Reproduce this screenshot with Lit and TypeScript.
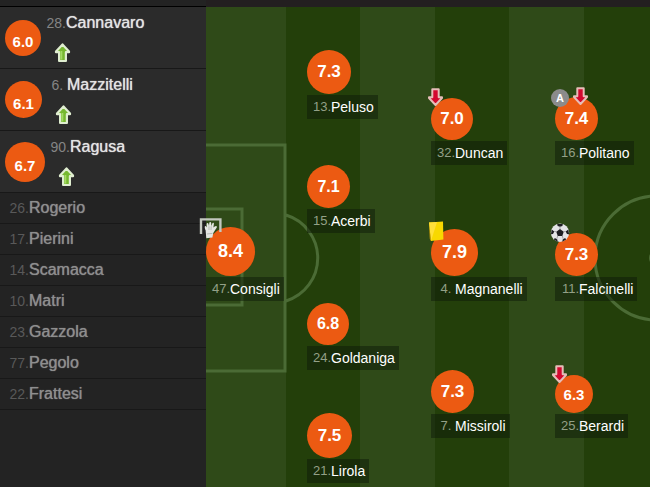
import { LitElement, html, css, svg, nothing } from "lit";
import { customElement, property } from "lit/decorators.js";
import { styleMap } from "lit/directives/style-map.js";

type Badge = "in" | "out" | "assist" | "goal" | "yellow" | "keeper";

interface BenchPlayer {
  no: number;
  name: string;
  rating?: string;
  size?: number;
}

interface PitchPlayer {
  no: number;
  name: string;
  rating: string;
  size: number;
  font: number;
  x: number;
  y: number;
  badges?: Badge[];
}

const bench: BenchPlayer[] = [
  { no: 28, name: "Cannavaro", rating: "6.0", size: 36 },
  { no: 6, name: "Mazzitelli", rating: "6.1", size: 37 },
  { no: 90, name: "Ragusa", rating: "6.7", size: 40 },
  { no: 26, name: "Rogerio" },
  { no: 17, name: "Pierini" },
  { no: 14, name: "Scamacca" },
  { no: 10, name: "Matri" },
  { no: 23, name: "Gazzola" },
  { no: 77, name: "Pegolo" },
  { no: 22, name: "Frattesi" },
];

// x and y give the top left corner of each name label on the pitch.
const lineup: PitchPlayer[] = [
  { no: 47, name: "Consigli", rating: "8.4", size: 49, font: 18, x: 0, y: 270, badges: ["keeper"] },
  { no: 13, name: "Peluso", rating: "7.3", size: 44, font: 17, x: 101, y: 88 },
  { no: 15, name: "Acerbi", rating: "7.1", size: 43, font: 16, x: 101, y: 202 },
  { no: 24, name: "Goldaniga", rating: "6.8", size: 42, font: 16, x: 101, y: 339 },
  { no: 21, name: "Lirola", rating: "7.5", size: 45, font: 17, x: 101, y: 452 },
  { no: 32, name: "Duncan", rating: "7.0", size: 42, font: 17, x: 225, y: 134, badges: ["out"] },
  { no: 4, name: "Magnanelli", rating: "7.9", size: 47, font: 18, x: 225, y: 270, badges: ["yellow"] },
  { no: 7, name: "Missiroli", rating: "7.3", size: 43, font: 17, x: 225, y: 407 },
  { no: 16, name: "Politano", rating: "7.4", size: 43, font: 17, x: 349, y: 134, badges: ["assist", "out"] },
  { no: 11, name: "Falcinelli", rating: "7.3", size: 43, font: 17, x: 349, y: 270, badges: ["goal"] },
  { no: 25, name: "Berardi", rating: "6.3", size: 38, font: 15, x: 349, y: 407, badges: ["out"] },
];

const shirt = (no: number) => (no < 10 ? `${no}.\u00a0` : `${no}.`);

@customElement("match-badge")
export class MatchBadge extends LitElement {
  @property() kind: Badge = "in";

  static styles = css`
    :host {
      display: block;
      height: 20px;
    }
    svg {
      display: block;
      overflow: visible;
    }
    .letter {
      font: bold 11px "Liberation Sans", Arial, sans-serif;
      fill: #fff;
      text-anchor: middle;
    }
  `;

  private art() {
    switch (this.kind) {
      case "in":
        return svg`<path d="M8.5 1.4 15 8.4V9.2H11.9V18H5.1V9.2H2V8.4Z" fill="#76b82f" stroke="#e0eed0" stroke-width="2.2" stroke-linejoin="round"/>
          <path d="M7.4 8v8.6" stroke="#a3da63" stroke-width="1.8"/>`;
      case "out":
        return svg`<path d="M5.3 1.2h6.4v8H15V10L8.5 17 2 10V9.2H5.3Z" fill="#d3082f" stroke="#e6bdb8" stroke-width="2" stroke-linejoin="round"/>`;
      case "assist":
        return svg`<circle cx="9" cy="11" r="9" fill="#8b8b8b"/><text class="letter" x="9" y="15">A</text>`;
      case "yellow":
        return svg`<path d="M2 3.4 16 2.6 16.4 20.4 4 22Z" fill="#f8d800"/><path d="M2 3.4 10 3 4 22Z" fill="#ffe03a"/><path d="M2 3.4 4 22 2.8 20Z" fill="#d9a500"/>`;
      case "goal":
        return svg`<circle cx="9" cy="9.8" r="9.2" fill="#e4e4e6"/>
          <path d="M9 6.1 12.7 8.8 11.3 13H6.7L5.3 8.8Z" fill="#1d1d22"/>
          <path d="M6.2.9 11.8.9 11.4 2.9 9 3.8 6.6 2.9ZM17.3 6.4 18.1 11.2 16 10.9 14.7 8.4ZM.7 6.4 3.3 8.4 2 10.9-.1 11.2ZM15.2 16.6 11.3 18.7 11.7 16.4 14.1 15ZM2.8 16.6 6.7 18.7 6.3 16.4 3.9 15Z" fill="#1d1d22"/>
          <path d="M9 6.1V3.8M12.7 8.8 14.7 8.4M11.3 13 12.2 15.8M6.7 13 5.8 15.8M5.3 8.8 3.3 8.4" stroke="#8f8f94" stroke-width=".8"/>`;
      case "keeper":
        return svg`<path d="M-1 17V2.4H18.4V15" fill="none" stroke="#c3c8bf" stroke-width="2.4"/>
          <path d="M3.6 13.2C2.9 12 2.4 9.6 3 9.2c.9-.4 1.4.5 1.8 1.4L4.6 6.9c.1-1.2 1.6-1.2 1.9 0L7 8.9 7.3 5.8c.2-1.2 1.7-1.1 1.9.1L9.3 8.9 10.3 6.4c.4-1.1 1.7-.8 1.6.4L11.4 10.6c1-.8 2.2-2 3.1-1.4.9.5.2 1.5-.4 2.3L11.3 16 10.4 20.6 4.3 21.2Z" fill="#e4e6e2"/>
          <path d="M4.8 17 10.4 16.4M7 9.3V13M9.2 9.3 9 13" stroke="#a9aca6" stroke-width=".8"/>`;
    }
  }

  render() {
    return html`<svg width="18" height="20" viewBox="0 0 18 20" aria-hidden="true">${this.art()}</svg>`;
  }
}

@customElement("bench-list")
export class BenchList extends LitElement {
  static styles = css`
    :host {
      display: block;
    }
    .list {
      list-style: none;
      margin: 0;
      padding: 0;
    }
    .row {
      box-sizing: border-box;
      display: flex;
      align-items: center;
      height: 31px;
      padding-left: 9px;
      border-bottom: 1px solid #181818;
      color: #8e8e8e;
      font-size: 16px;
      line-height: 20px;
    }
    .used {
      height: 62px;
      padding-left: 5px;
      gap: 5px;
      background: #2b2b2b;
      color: #e4e4e4;
    }
    .rating {
      box-sizing: border-box;
      display: flex;
      flex: none;
      align-items: center;
      justify-content: center;
      padding-top: 8px;
      border-radius: 50%;
      background: #ec5a12;
      color: #fff;
      font-size: 15px;
      font-weight: bold;
    }
    .info {
      display: flex;
      flex-direction: column;
      gap: 10px;
    }
    .who {
      display: flex;
      align-items: baseline;
    }
    .no {
      width: 20px;
      text-align: right;
      font-size: 14px;
      color: #595959;
    }
    .used .no {
      color: #858585;
    }
    .name {
      text-shadow: 0 0 1px currentColor;
    }
    .change {
      margin-left: 8px;
    }
  `;

  private who(p: BenchPlayer) {
    return html`<div class="who"><span class="no">${shirt(p.no)}</span><span class="name">${p.name}</span></div>`;
  }

  render() {
    return html`<ul class="list">
      ${bench.map((p) =>
        p.rating
          ? html`<li class="row used">
              <span class="rating" style=${styleMap({ width: `${p.size}px`, height: `${p.size}px` })}>${p.rating}</span>
              <div class="info">${this.who(p)}<match-badge class="change" kind="in"></match-badge></div>
            </li>`
          : html`<li class="row">${this.who(p)}</li>`,
      )}
    </ul>`;
  }
}

@customElement("pitch-view")
export class PitchView extends LitElement {
  static styles = css`
    :host {
      display: block;
      position: relative;
      min-height: 480px;
      background:
        linear-gradient(#2f4a18, #2f4a18) 0 0 / 80px 100% no-repeat,
        repeating-linear-gradient(to right, #233f0a 0 74px, #2f4a18 74px 149px) 80px 0;
    }
    .lines {
      position: absolute;
      inset: 0;
      width: 100%;
      height: 100%;
      fill: none;
      stroke: #4b6b35;
      stroke-width: 3;
    }
    .dot {
      fill: #4b6b35;
      stroke: none;
    }
    .player {
      position: absolute;
      display: flex;
      flex-direction: column;
      align-items: flex-start;
      gap: 1px;
    }
    .stand {
      display: flex;
      align-items: flex-end;
      height: 50px;
    }
    .rating {
      position: relative;
      display: flex;
      align-items: center;
      justify-content: center;
      border-radius: 50%;
      background: #ec5a12;
      color: #fff;
      font-weight: bold;
    }
    .badges {
      position: absolute;
      top: -10px;
      left: -4px;
      display: flex;
      gap: 3px;
    }
    .label {
      display: flex;
      padding-right: 4px;
      background: rgba(14, 26, 8, 0.5);
      font-size: 14px;
      line-height: 24px;
      white-space: nowrap;
    }
    .no {
      width: 24px;
      text-align: right;
      font-size: 13px;
      color: #93a087;
    }
    .name {
      color: #fff;
    }
  `;

  render() {
    return html`
      <svg class="lines" aria-hidden="true">
        <path d="M0 138H79V364H0M0 202H36V298H0M80 208A45 45 0 0 1 80 294" />
        <circle cx="451" cy="251" r="62" />
        <circle class="dot" cx="451" cy="251" r="8" />
      </svg>
      ${lineup.map(
        (p) => html`<div class="player" style=${styleMap({ left: `${p.x}px`, top: `${p.y - 51}px` })}>
          <div class="stand">
            <div class="rating" style=${styleMap({ width: `${p.size}px`, height: `${p.size}px`, fontSize: `${p.font}px` })}>
              ${p.rating}
              ${p.badges
                ? html`<div class="badges">${p.badges.map((b) => html`<match-badge kind=${b}></match-badge>`)}</div>`
                : nothing}
            </div>
          </div>
          <div class="label"><span class="no">${shirt(p.no)}</span><span class="name">${p.name}</span></div>
        </div>`,
      )}
    `;
  }
}

@customElement("app-root")
export class AppRoot extends LitElement {
  static styles = css`
    :host {
      display: flex;
      flex-direction: column;
      min-height: 100vh;
      overflow: hidden;
      background: #232323;
      font-family: "Liberation Sans", Arial, sans-serif;
    }
    .strip {
      display: flex;
      height: 7px;
      background: #231f20;
    }
    .edge {
      box-sizing: border-box;
      width: 206px;
      border-bottom: 1px solid #000;
      background: #232323;
    }
    .board {
      display: flex;
      flex: 1;
    }
    .side {
      flex: none;
      width: 206px;
    }
    .pitch {
      flex: 1;
      min-width: 0;
    }
  `;

  render() {
    return html`
      <div class="strip"><div class="edge"></div></div>
      <main class="board">
        <bench-list class="side"></bench-list>
        <pitch-view class="pitch"></pitch-view>
      </main>
    `;
  }
}
